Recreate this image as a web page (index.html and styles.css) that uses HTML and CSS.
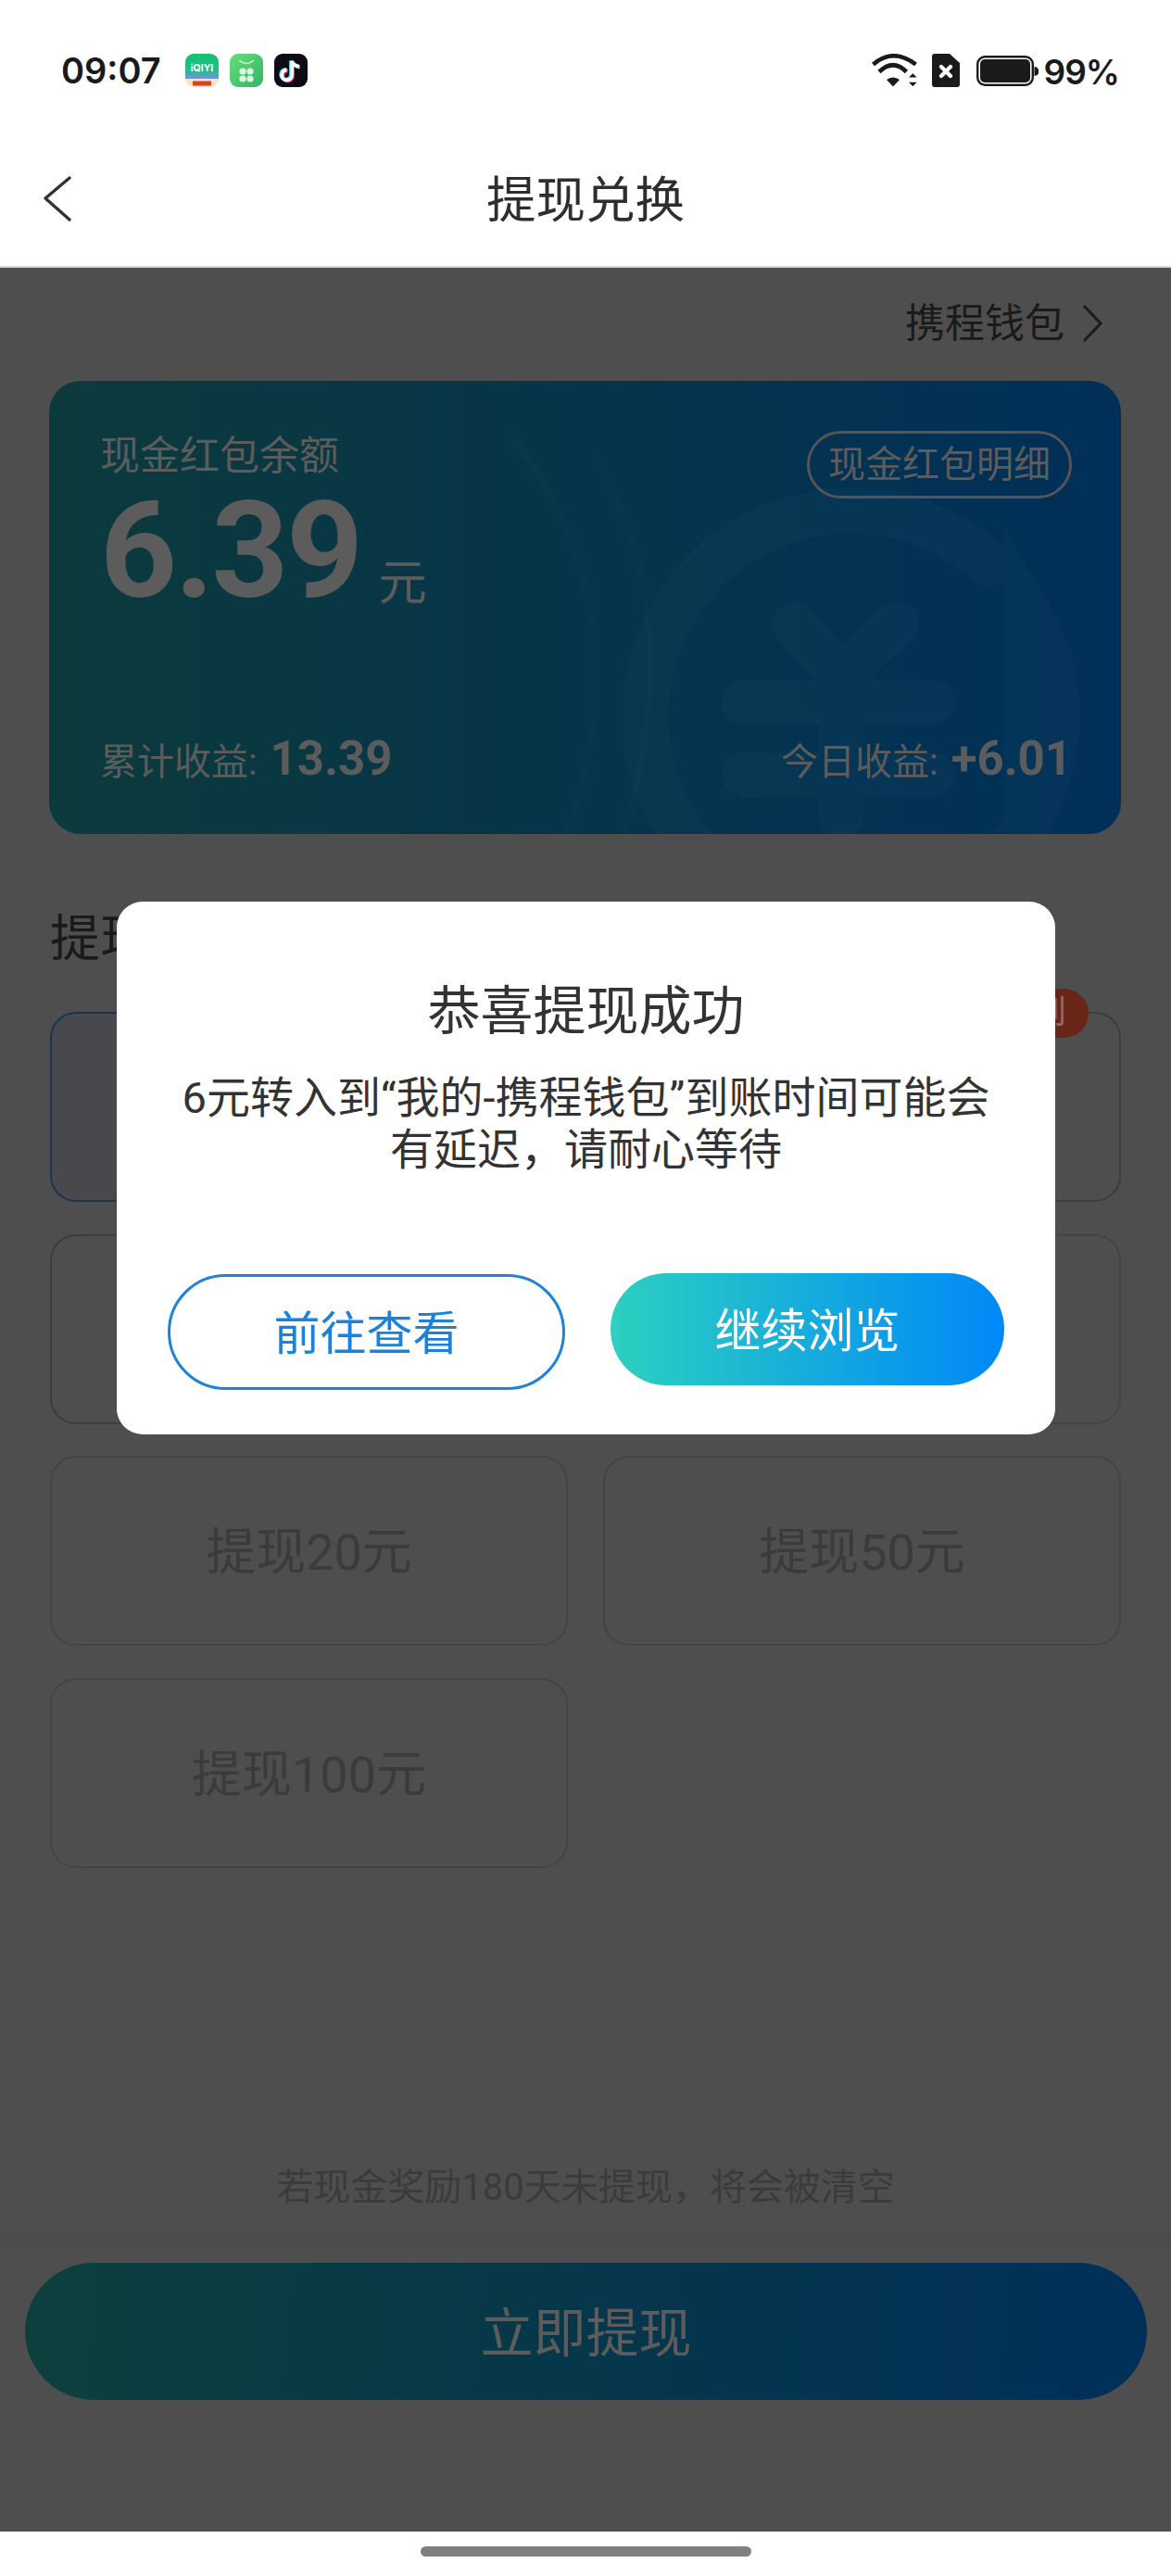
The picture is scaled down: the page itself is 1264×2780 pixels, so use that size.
FILE: index.html
```html
<!DOCTYPE html>
<html lang="zh-CN">
<head>
<meta charset="utf-8">
<title>提现兑换</title>
<link rel="stylesheet" href="styles.css">
</head>
<body>
<div class="screen">
  <header class="status">
    <div class="status-left">
      <span class="clock">09:07</span>
      <svg class="app" viewBox="0 0 36 36" width="36" height="36">
        <defs>
          <linearGradient id="iq" x1="0" y1="0" x2="0" y2="1"><stop offset="0" stop-color="#14c16e"/><stop offset=".7" stop-color="#22c08c"/><stop offset=".92" stop-color="#7a8fd8"/></linearGradient>
          <clipPath id="iqc"><rect width="36" height="36" rx="9"/></clipPath>
        </defs>
        <g clip-path="url(#iqc)">
          <rect width="36" height="28" fill="url(#iq)"/>
          <rect y="27" width="36" height="9" fill="#fbe3c9"/>
          <rect x="8" y="29.500" width="20" height="5" fill="#d9431e"/>
        </g>
        <text class="iq-text" x="18" y="19" text-anchor="middle">iQIYI</text>
      </svg>
      <svg class="app" viewBox="0 0 36 36" width="36" height="36">
        <defs><linearGradient id="gr" x1="0" y1="0" x2="1" y2="1"><stop offset="0" stop-color="#6bdc7c"/><stop offset="1" stop-color="#2fb764"/></linearGradient></defs>
        <rect width="36" height="36" rx="9" fill="url(#gr)"/>
        <path d="M10 7 Q18 14 26 7" fill="none" stroke="#d6f7dc" stroke-width="1.6"/>
        <circle cx="14" cy="19" r="3.6" fill="#dff8e3"/><circle cx="22" cy="19" r="3.6" fill="#dff8e3"/>
        <circle cx="14" cy="27" r="3.6" fill="#dff8e3"/><circle cx="22" cy="27" r="3.6" fill="#dff8e3"/>
      </svg>
      <svg class="app" viewBox="0 0 36 36" width="36" height="36">
        <rect width="36" height="36" rx="9" fill="#0d0b16"/>
        <g fill="none" stroke-width="4">
          <path d="M19 8 V23 a5.4 5.4 0 1 1 -5.4 -5.4 M19 8 Q20.500 13 27 14" stroke="#25e4e8" transform="translate(-1 -.7)"/>
          <path d="M19 8 V23 a5.4 5.4 0 1 1 -5.4 -5.4 M19 8 Q20.500 13 27 14" stroke="#fb2d55" transform="translate(1 .7)"/>
          <path d="M19 8 V23 a5.4 5.4 0 1 1 -5.4 -5.4 M19 8 Q20.500 13 27 14" stroke="#fff"/>
        </g>
      </svg>
    </div>
    <div class="status-right">
      <svg class="wifi" viewBox="0 0 50 36" width="50" height="36">
        <path d="M1.500 11.500 Q23 -7 47.500 11.500" fill="none" stroke="#1a1a1a" stroke-width="4.600"/>
        <path d="M8 19.500 Q23 5 37.500 19.500" fill="none" stroke="#1a1a1a" stroke-width="4.600"/>
        <path d="M16 28 Q23 23 30 28 L23 35.500 Z" fill="#1a1a1a"/>
        <path d="M40 25.500 H48.700 L44.300 21.300 Z M40 30.700 H48.700 L44.300 35.300 Z" fill="#1a1a1a"/>
      </svg>
      <svg class="sim" viewBox="0 0 30 36" width="30" height="36">
        <path d="M3 0 H19 L30 10 V33 a3 3 0 0 1 -3 3 H3 a3 3 0 0 1 -3 -3 V3 a3 3 0 0 1 3 -3 Z" fill="#1a1a1a"/>
        <path d="M10 14 L20 24 M20 14 L10 24" stroke="#fff" stroke-width="4.200" stroke-linecap="round"/>
      </svg>
      <svg class="battery" viewBox="0 0 67 33" width="67" height="33">
        <rect x="1.200" y="1.200" width="59.600" height="30.600" rx="8" fill="none" stroke="#1a1a1a" stroke-width="2.400"/>
        <rect x="4" y="4" width="54" height="25" rx="5" fill="#1a1a1a"/>
        <path d="M62.500 12 a5 5 0 0 1 0 10 Z" fill="#1a1a1a"/>
      </svg>
      <span class="percent">99%</span>
    </div>
  </header>

  <nav class="topbar">
    <svg class="back" viewBox="0 0 32 50" width="32" height="50"><path d="M29 2 L3 24 L29 47" fill="none" stroke="#333" stroke-width="3.400" stroke-linecap="round" stroke-linejoin="round"/></svg>
    <h1 class="topbar-title">提现兑换</h1>
  </nav>

  <main class="page">
    <div class="wallet-link">
      <span>携程钱包</span>
      <svg viewBox="0 0 24 42" width="24" height="42"><path d="M3 2 L21 21 L3 40" fill="none" stroke="#1c1c1c" stroke-width="3"/></svg>
    </div>

    <section class="balance">
      <svg class="balance-art" viewBox="0 0 1157 489" width="1157" height="489">
        <g fill="none" stroke="#fff" stroke-opacity=".018" stroke-linecap="round">
          <path d="M1014 197 A222 222 0 1 0 1056 248 V700" stroke-width="50"/>
          <path d="M804 262 L855 318 L915 262 M750 347 H955 M855 318 V470 M750 425 H955" stroke-width="48" stroke-linejoin="round"/>
        </g>
        <path d="M500 60 Q640 240 560 489 M590 80 Q690 260 620 489" fill="none" stroke="#fff" stroke-opacity=".01" stroke-width="8"/>
      </svg>
      <div class="balance-head">
        <div>
          <div class="balance-label">现金红包余额</div>
          <div class="balance-amount"><strong>6.39</strong><span>元</span></div>
        </div>
        <div class="detail-pill">现金红包明细</div>
      </div>
      <div class="balance-foot">
        <div>累计收益: <strong>13.39</strong></div>
        <div>今日收益: <strong>+6.01</strong></div>
      </div>
    </section>

    <h2 class="section-title">提现金额</h2>

    <div class="options">
      <div class="option selected"></div>
      <div class="option"><span class="badge">秒到</span></div>
      <div class="option"></div>
      <div class="option faded"></div>
      <div class="option faded">提现20元</div>
      <div class="option faded">提现50元</div>
      <div class="option faded">提现100元</div>
    </div>

    <p class="note">若现金奖励180天未提现，将会被清空</p>

    <footer class="action-bar">
      <div class="action-btn">立即提现</div>
    </footer>
  </main>

  <div class="home-bar"><span></span></div>

  <div class="dialog">
    <h3 class="dialog-title">恭喜提现成功</h3>
    <p class="dialog-body">6元转入到“我的-携程钱包”到账时间可能会有延迟，请耐心等待</p>
    <div class="dialog-actions">
      <div class="btn-outline">前往查看</div>
      <div class="btn-fill">继续浏览</div>
    </div>
  </div>
</div>
</body>
</html>
```
FILE: styles.css
```css
* { box-sizing: border-box; }

html, body { margin: 0; padding: 0; background: #fff; }

body {
  font-family: Roboto, "Noto Sans CJK SC", sans-serif;
  color: #333;
}

.screen {
  position: relative;
  width: 1264px;
  height: 2780px;
  overflow: hidden;
  display: flex;
  flex-direction: column;
}

/* status bar */
.status {
  height: 140px;
  padding: 58px 56px 0 66px;
  display: flex;
  justify-content: space-between;
  align-items: flex-start;
  font-family: Inter, "Liberation Sans", sans-serif;
  color: #1a1a1a;
}
.status-left { display: flex; align-items: center; gap: 12px; height: 36px; }
.clock { font-size: 38px; font-weight: 600; line-height: 36px; margin-right: 14px; }
.status-right { display: flex; align-items: center; height: 36px; }
.wifi { margin-right: 15px; }
.sim { margin-right: 18px; }
.battery { margin-right: 6px; }
.percent { font-size: 37px; font-weight: 600; letter-spacing: -1px; line-height: 36px; margin-top: 3px; }
.iq-text { font: 700 10.500px Inter, sans-serif; fill: #fff; }
.app { display: block; }

/* top navigation */
.topbar {
  height: 149px;
  position: relative;
  display: flex;
  align-items: center;
  justify-content: center;
  border-bottom: 2px solid #d8d8d8;
}
.back { position: absolute; left: 46px; top: 50px; }
.topbar-title { margin: 6px 0 0; font-size: 53.500px; font-weight: 400; line-height: 70px; color: #2e2e2e; }

/* dimmed page underneath the dialog */
.page {
  flex: 1;
  background: #4e4e4e;
  display: flex;
  flex-direction: column;
}

.wallet-link {
  margin-top: 30px;
  height: 60px;
  padding-right: 73px;
  display: flex;
  justify-content: flex-end;
  align-items: center;
  gap: 18px;
  font-size: 43px;
  line-height: 60px;
  color: #1a1a1a;
}

.balance {
  position: relative;
  margin: 32px 54px 0 53px;
  height: 489px;
  border-radius: 34px;
  overflow: hidden;
  padding: 56px 53px 0 55px;
  background: linear-gradient(90deg, #0c3a3c 0%, #002f59 100%);
  color: #5c5c5c;
  display: flex;
  flex-direction: column;
  justify-content: space-between;
}
.balance-art { position: absolute; left: 0; top: 0; }
.balance-head, .balance-foot { position: relative; display: flex; justify-content: space-between; }
.balance-label { font-size: 43px; line-height: 50px; }
.balance-amount { display: flex; align-items: flex-end; margin-top: 7px; height: 140px; }
.balance-amount strong { font-size: 145px; line-height: 140px; font-weight: 700; letter-spacing: -2.500px; }
.balance-amount span { font-size: 52px; line-height: 60px; margin-left: 19px; margin-bottom: 4px; }
.detail-pill {
  align-self: flex-start;
  height: 73px;
  margin-top: -2px;
  padding: 0 20px;
  border: 3px solid #555;
  border-radius: 37px;
  font-size: 40px;
  line-height: 67px;
}
.balance-foot { font-size: 40px; line-height: 60px; margin-bottom: 47px; }
.balance-foot strong { font-size: 51px; font-weight: 700; margin-left: 4px; }

.section-title {
  margin: 84px 0 0 54px;
  font-size: 54px;
  font-weight: 400;
  line-height: 60px;
  color: #1a1a1a;
}

.options {
  margin: 48px 54px 0 54px;
  display: grid;
  grid-template-columns: 1fr 1fr;
  grid-auto-rows: 205px;
  column-gap: 38px;
  row-gap: 34.500px;
}
.option {
  position: relative;
  border: 2px solid #3c3c3c;
  border-radius: 28px;
  display: flex;
  align-items: center;
  justify-content: center;
  padding-bottom: 6px;
  font-size: 54px;
  color: #3b3b3b;
}
.option.selected { background: #47494d; border-color: #1a3550; }
.option.faded { border-color: #444; }
.badge {
  position: absolute;
  right: 33px;
  top: -27px;
  height: 53px;
  padding: 0 24px;
  border-radius: 27px;
  background: #692518;
  color: #8c6e66;
  font-size: 36px;
  line-height: 53px;
}

.note {
  margin: 320px 0 0;
  text-align: center;
  font-size: 40px;
  line-height: 50px;
  color: #3b3b3b;
}

.action-bar {
  margin-top: 24px;
  padding: 32px 26px 0 27px;
  background: linear-gradient(180deg, #4a4a4a 0, #4e4e4e 22px);
  flex: 1;
}
.action-btn {
  height: 148px;
  border-radius: 74px;
  background: linear-gradient(95deg, #0c3f3c 0%, #002f59 100%);
  display: flex;
  align-items: center;
  justify-content: center;
  padding-bottom: 6px;
  font-size: 57px;
  color: #5c5c5c;
}

.home-bar { height: 48px; padding-top: 16px; display: flex; justify-content: center; }
.home-bar span { width: 357px; height: 11px; border-radius: 6px; background: #808080; }

/* success dialog */
.dialog {
  position: absolute;
  left: 126px;
  top: 973px;
  width: 1013px;
  height: 575px;
  padding-top: 84px;
  background: #fff;
  border-radius: 28px;
  text-align: center;
}
.dialog-title { margin: 0; font-size: 57px; font-weight: 400; line-height: 70px; color: #333; }
.dialog-body { margin: 30px 0 0; padding: 0 60px; font-size: 47px; line-height: 56px; color: #333; }
.dialog-actions {
  margin-top: 105px;
  padding: 0 55px;
  display: flex;
  justify-content: space-between;
  align-items: flex-start;
}
.btn-outline, .btn-fill {
  display: flex;
  align-items: center;
  justify-content: center;
  padding-bottom: 6px;
  font-size: 50px;
}
.btn-outline {
  width: 429px;
  height: 125px;
  margin-top: 1px;
  border: 3.500px solid #1f83da;
  border-radius: 63px;
  color: #1a82dc;
}
.btn-fill {
  width: 425px;
  height: 121px;
  border-radius: 61px;
  color: #fff;
  background: linear-gradient(90deg, #2dd0c0 0%, #0088f8 100%);
}
```
